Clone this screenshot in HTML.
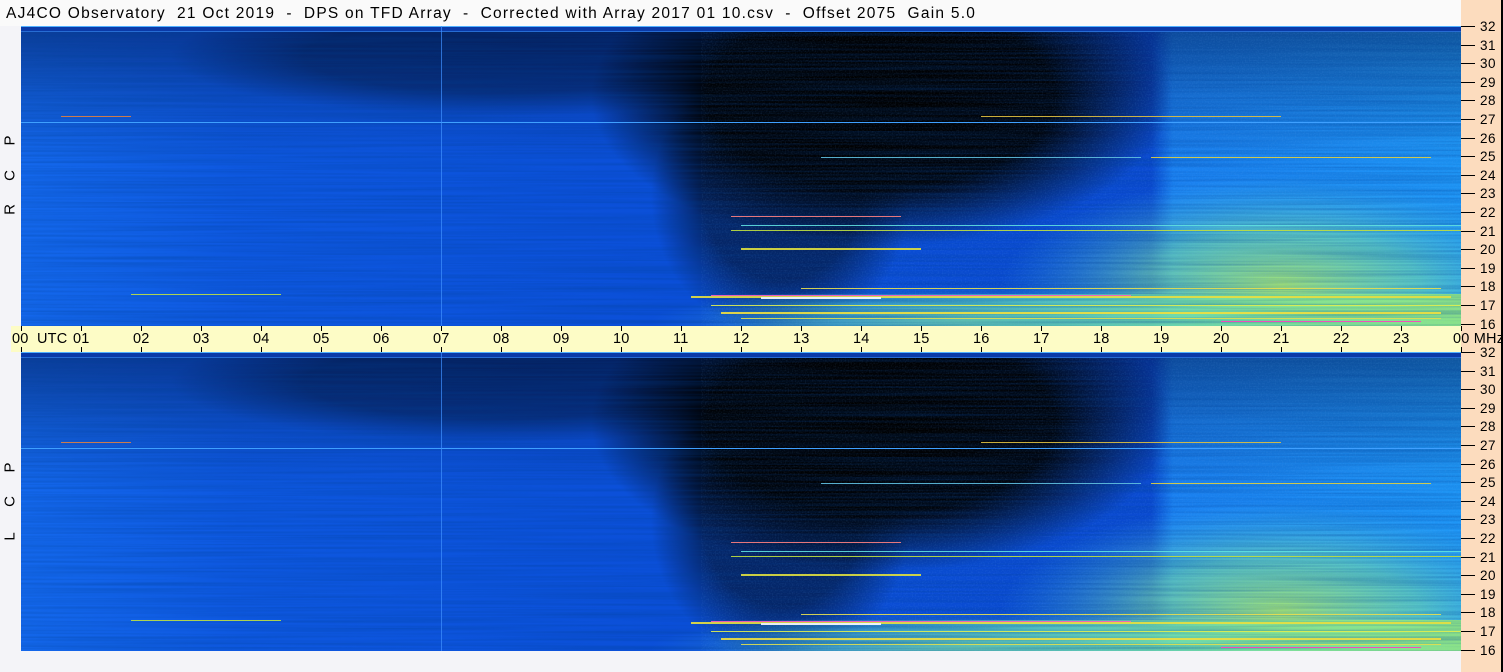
<!DOCTYPE html>
<html><head><meta charset="utf-8"><style>
*{margin:0;padding:0}
html,body{width:1503px;height:672px;overflow:hidden}
body{background:#f4f4f8;position:relative;font-family:"Liberation Sans",sans-serif;color:#000}
#title{position:absolute;left:0;top:0;width:1461px;height:26px;background:#fafafa;font-size:15.5px;letter-spacing:1.25px;line-height:27px;padding-left:6px;white-space:pre;box-sizing:border-box}
#peach{position:absolute;left:1461px;top:0;width:40px;height:672px;background:#fcdcbe;border-right:2px solid #000}
#bar{position:absolute;left:11px;top:326px;width:1450px;height:26px;background:#fdfcc6}
.t{position:absolute;font-size:14.5px;letter-spacing:0.2px;top:331px;white-space:pre}
.tk{position:absolute;width:1px;height:5px;background:#000}
.f{position:absolute;left:1480px;font-size:13.5px;line-height:13px;letter-spacing:.5px}
.fl{position:absolute;left:1461px;width:14px;height:1px;background:#000}
.lab{position:absolute;left:3px;font-size:15px;transform:rotate(-90deg);width:14px;text-align:center;line-height:15px}
svg{position:absolute;left:21px}
</style></head><body>
<div id="title">AJ4CO Observatory  21 Oct 2019  -  DPS on TFD Array  -  Corrected with Array 2017 01 10.csv  -  Offset 2075  Gain 5.0</div>
<div id="peach"></div>
<svg width="0" height="0" style="position:absolute">
<defs>
<linearGradient id="gx" x1="0" x2="1" y1="0" y2="0">
<stop offset="0" stop-color="#1468ec"/><stop offset="0.15" stop-color="#0e58e0"/><stop offset="0.45" stop-color="#0b4fd8"/><stop offset="0.785" stop-color="#0a4ad0"/><stop offset="0.80" stop-color="#1a80f0"/><stop offset="1" stop-color="#1e96f6"/>
</linearGradient>
<linearGradient id="gy" x1="0" x2="0" y1="0" y2="1">
<stop offset="0" stop-color="#000830" stop-opacity="0.45"/><stop offset="0.25" stop-color="#000830" stop-opacity="0.15"/><stop offset="0.45" stop-color="#000830" stop-opacity="0"/>
</linearGradient>
<radialGradient id="dark" cx="0.5" cy="0.5" r="0.5">
<stop offset="0" stop-color="#000" stop-opacity="1"/><stop offset="0.6" stop-color="#000" stop-opacity="0.95"/><stop offset="1" stop-color="#000" stop-opacity="0"/>
</radialGradient>
<radialGradient id="green" cx="0.5" cy="0.5" r="0.5">
<stop offset="0" stop-color="#b8f060" stop-opacity="0.85"/><stop offset="0.5" stop-color="#80e8a0" stop-opacity="0.55"/><stop offset="1" stop-color="#40c0f0" stop-opacity="0"/>
</radialGradient>
<linearGradient id="band" x1="0" x2="1">
<stop offset="0" stop-color="#40d0e0" stop-opacity="0"/><stop offset="0.4" stop-color="#60e0c0" stop-opacity="0.6"/><stop offset="1" stop-color="#a0f070" stop-opacity="0.8"/>
</linearGradient>
<filter id="nz" x="0" y="0" width="1" height="1"><feTurbulence type="fractalNoise" baseFrequency="0.004 0.45" numOctaves="2" seed="3"/><feColorMatrix values="0 0 0 0 0  0 0 0 0 0.05  0 0 0 0 0.3  0 0 0 0.9 -0.3"/></filter>
<filter id="nz2" x="0" y="0" width="1" height="1"><feTurbulence type="fractalNoise" baseFrequency="0.7 0.7" numOctaves="1" seed="7"/><feColorMatrix values="0 0 0 0 0.2  0 0 0 0 0.5  0 0 0 0 1  0 0 0 0.8 -0.35"/></filter>
<g id="spec">
<rect width="1440" height="300" fill="url(#gx)"/>
<rect width="1440" height="300" fill="url(#gy)"/>
<ellipse cx="480" cy="30" rx="330" ry="60" fill="url(#dark)" opacity="0.35"/>
<ellipse cx="860" cy="70" rx="290" ry="150" fill="url(#dark)"/>
<ellipse cx="760" cy="170" rx="130" ry="140" fill="url(#dark)" opacity="0.55"/>
<ellipse cx="1260" cy="260" rx="280" ry="110" fill="url(#green)"/>
<ellipse cx="950" cy="295" rx="320" ry="35" fill="url(#green)" opacity="0.6"/>
<rect x="680" y="268" width="760" height="32" fill="url(#band)"/>
<rect width="1440" height="300" filter="url(#nz)" opacity="0.7"/>
<rect x="680" width="760" height="300" filter="url(#nz2)" opacity="0.35"/>
<rect width="1440" height="6" fill="#0a3aa8"/>
<rect y="0" width="1440" height="1" fill="#50b0ff"/>
<rect y="96" width="1440" height="1" fill="#3fa0ff"/>
<rect y="5" width="1440" height="1" fill="#3a8ef0" opacity=".6"/>
<rect x="420" width="1" height="300" fill="#3f90ff" opacity=".7"/>
<g opacity="0.9">
<rect x="670" y="270" width="760" height="2" fill="#e8e040"/>
<rect x="690" y="269" width="420" height="1" fill="#ff60c0"/>
<rect x="740" y="271" width="120" height="2" fill="#fff"/>
<rect x="720" y="222" width="180" height="2" fill="#e0e040"/>
<rect x="780" y="262" width="640" height="1" fill="#e8e050"/>
<rect x="690" y="279" width="760" height="1" fill="#e0f050"/>
<rect x="700" y="286" width="720" height="2" fill="#f0e040"/>
<rect x="720" y="292" width="700" height="1" fill="#e0e050"/>
<rect x="1130" y="131" width="280" height="1" fill="#e0d040"/>
<rect x="800" y="131" width="320" height="1" fill="#60c0e0"/>
<rect x="960" y="90" width="300" height="1" fill="#e0c040"/>
<rect x="720" y="199" width="780" height="1" fill="#60e0e0"/>
<rect x="710" y="204" width="730" height="1" fill="#c0e040"/>
<rect x="710" y="190" width="170" height="1" fill="#ff8080"/>
<rect x="40" y="90" width="70" height="1" fill="#e08040"/>
<rect x="110" y="268" width="150" height="1" fill="#c0e040"/>
<rect x="1200" y="295" width="200" height="1" fill="#ff40c0"/>
</g>
</g>
</defs></svg>
<svg width="1440" height="300" style="top:26px"><use href="#spec"/></svg>
<svg width="1440" height="299" style="top:352px"><use href="#spec"/></svg>
<div id="bar"></div>
<div class="t" style="left:12px">00  UTC</div>
<div class="t" style="left:73px">01</div><div class="t" style="left:133px">02</div><div class="t" style="left:193px">03</div><div class="t" style="left:253px">04</div><div class="t" style="left:313px">05</div><div class="t" style="left:373px">06</div><div class="t" style="left:433px">07</div><div class="t" style="left:493px">08</div><div class="t" style="left:553px">09</div><div class="t" style="left:613px">10</div><div class="t" style="left:673px">11</div><div class="t" style="left:733px">12</div><div class="t" style="left:793px">13</div><div class="t" style="left:853px">14</div><div class="t" style="left:913px">15</div><div class="t" style="left:973px">16</div><div class="t" style="left:1033px">17</div><div class="t" style="left:1093px">18</div><div class="t" style="left:1153px">19</div><div class="t" style="left:1213px">20</div><div class="t" style="left:1273px">21</div><div class="t" style="left:1333px">22</div><div class="t" style="left:1393px">23</div><div class="t" style="left:1453px">00 MHz</div>
<div id="ticks"></div>
<div class="lab" style="top:133px">P</div><div class="lab" style="top:168px">C</div><div class="lab" style="top:202px">R</div>
<div class="lab" style="top:460px">P</div><div class="lab" style="top:494px">C</div><div class="lab" style="top:529px">L</div>
<div id="fq"></div>
<script>
var h='';for(var i=0;i<=24;i++){var x=21+i*60;h+='<div class="tk" style="left:'+x+'px;top:326px"></div><div class="tk" style="left:'+x+'px;top:347px"></div>';}
document.getElementById('ticks').innerHTML=h;
var f='';[26,352].forEach(function(t){for(var k=0;k<=16;k++){var y=Math.round(t+k*18.6);f+='<div class="fl" style="top:'+y+'px"></div><div class="f" style="top:'+(y-6)+'px">'+(32-k)+'</div>';}});
document.getElementById('fq').innerHTML=f;
</script>
</body></html>
